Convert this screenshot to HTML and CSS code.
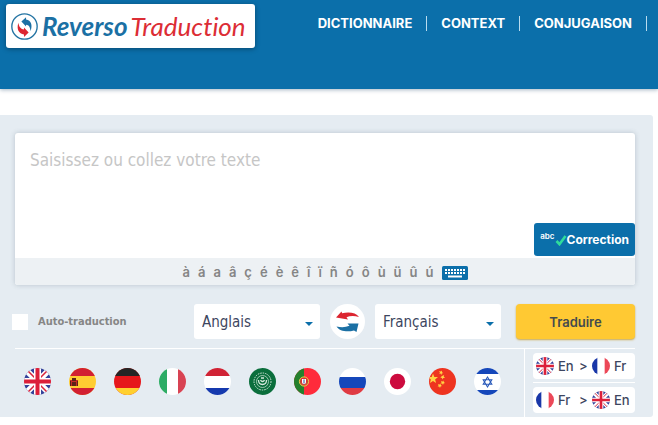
FILE: index.html
```html
<!DOCTYPE html>
<html lang="fr">
<head>
<meta charset="utf-8">
<meta name="viewport" content="width=device-width, initial-scale=1">
<title>Reverso Traduction</title>
<link rel="stylesheet" href="styles.css">
</head>
<body>
<svg class="defs" aria-hidden="true">
  <symbol id="uk" viewBox="0 0 27 27">
    <path fill="#34429a" d="M0 0h27v27H0z"/>
    <path stroke="#fff" stroke-width="6" d="M0 0l27 27M27 0L0 27"/>
    <path stroke="#d8243c" stroke-width="1.500" d="M1 0l12 12M26 0L14 12M1 27l12-12M26 27L14 15"/>
    <path stroke="#fff" stroke-width="7" d="M13.500 0v27M0 13.500h27"/>
    <path stroke="#dc203a" stroke-width="4" d="M13.500 0v27M0 13.500h27"/>
  </symbol>
  <symbol id="fr" viewBox="0 0 27 27">
    <path fill="#fff" d="M0 0h27v27H0z"/>
    <path fill="#1937a8" d="M0 0h8v27H0z"/>
    <path fill="#ec4858" d="M19 0h8v27h-8z"/>
  </symbol>
</svg>

<header class="header">
  <a class="logo" href="#" aria-label="Reverso Traduction">
    <svg class="logo-mark" viewBox="0 0 26 26" aria-hidden="true">
      <circle cx="13" cy="13" r="12.200" fill="#fff" stroke="#2474a3" stroke-width="1.300"/>
      <path fill="#1b70a4" d="M10 8.200L14.500 4v2.200c5 .8 6.500 5.500 4.300 11.300-.3-4-1.500-6-4.300-6.300V13z"/>
      <path fill="#dc2530" d="M17 18.800L12.500 23v-2.200c-5-.8-7.500-5.300-5.300-11.300.3 4 2.500 6.300 5.300 6.500v-2z"/>
    </svg>
    <span class="logo-text"><b>Reverso</b><span>Traduction</span></span>
  </a>
  <nav class="nav">
    <a href="#">DICTIONNAIRE</a>
    <a href="#">CONTEXT</a>
    <a href="#">CONJUGAISON</a>
  </nav>
</header>

<main class="panel">
  <section class="editor">
    <textarea class="source" aria-label="Texte à traduire" placeholder="Saisissez ou collez votre texte"></textarea>
    <button class="correction" type="button">
      <span class="abc">abc</span>
      <svg class="check" viewBox="0 0 12 12" aria-hidden="true"><path d="M1.500 7l3 3.200L10.500 2" fill="none" stroke="#2fdc9c" stroke-width="2.600"/></svg>
      <span>Correction</span>
    </button>
    <div class="chars">
      <button type="button">à</button><button type="button">á</button><button type="button">a</button><button type="button">â</button><button type="button">ç</button><button type="button">é</button><button type="button">è</button><button type="button">ê</button><button type="button">î</button><button type="button">ï</button><button type="button">ñ</button><button type="button">ó</button><button type="button">ô</button><button type="button">ù</button><button type="button">ü</button><button type="button">û</button><button type="button">ú</button>
      <button class="keyboard" type="button" aria-label="Clavier">
        <svg viewBox="0 0 26 14" aria-hidden="true">
          <rect width="26" height="14" rx="1.500" fill="#0b6faa"/>
          <path stroke="#fff" stroke-width="2" stroke-dasharray="2 1" d="M3 4h21M3 7h21"/>
          <path stroke="#fff" stroke-width="2" d="M6 10.500h14"/>
        </svg>
      </button>
    </div>
  </section>

  <form class="controls">
    <label class="auto"><input type="checkbox">Auto-traduction</label>
    <div class="select"><select aria-label="Langue source"><option>Anglais</option><option>Français</option></select></div>
    <button class="swap" type="button" aria-label="Inverser les langues">
      <svg viewBox="0 0 35 35" aria-hidden="true">
        <path fill="#dc2530" d="M6 13.500L11.500 7.500l.6 1.700C19 7.500 26 8.500 29 13c-5-1.500-9-1.300-12.500.3l1.500 2.200z"/>
        <path fill="#1b70a4" d="M28.500 19.500L26.500 28l-2.500-1.500C17 28.500 9 27 6.500 22.500c5 1.200 9 .9 13-.7L17.500 19.500z"/>
      </svg>
    </button>
    <div class="select"><select aria-label="Langue cible"><option>Français</option><option>Anglais</option></select></div>
    <button class="translate" type="button">Traduire</button>
  </form>

  <div class="shortcuts">
    <div class="flags">
      <button type="button" aria-label="Anglais"><svg class="flag"><use href="#uk"/></svg></button>
      <button type="button" aria-label="Espagnol"><svg class="flag" viewBox="0 0 27 27"><path fill="#ffcd32" d="M0 0h27v27H0z"/><path fill="#d22032" d="M0 0h27v8H0zM0 20h27v7H0z"/><path fill="#c62b25" d="M1 12h8v6H1z"/><path fill="#5e2418" d="M3 10h4v3H3zM1 13h1v5H1zM8 13h1v5H8zM3 14h4v4H3z"/></svg></button>
      <button type="button" aria-label="Allemand"><svg class="flag" viewBox="0 0 27 27"><path fill="#e6171b" d="M0 0h27v27H0z"/><path fill="#252525" d="M0 0h27v8H0z"/><path fill="#ffd02f" d="M0 20h27v7H0z"/></svg></button>
      <button type="button" aria-label="Italien"><svg class="flag" viewBox="0 0 27 27"><path fill="#fff" d="M0 0h27v27H0z"/><path fill="#2dac65" d="M0 0h8v27H0z"/><path fill="#d84353" d="M19 0h8v27h-8z"/></svg></button>
      <button type="button" aria-label="Néerlandais"><svg class="flag" viewBox="0 0 27 27"><path fill="#fff" d="M0 0h27v27H0z"/><path fill="#d02335" d="M0 0h27v8H0z"/><path fill="#1539ae" d="M0 20h27v7H0z"/></svg></button>
      <button type="button" aria-label="Arabe"><svg class="flag" viewBox="0 0 27 27"><path fill="#0a6e3c" d="M0 0h27v27H0z"/><g fill="none" stroke="#d5e8dc"><circle cx="13.500" cy="13.500" r="8.500" stroke-dasharray="1.500 1"/><circle cx="13.500" cy="13.500" r="6" stroke-width=".7"/><path stroke-width="1.300" d="M9.500 12c0 6 8 6 8 0M11.500 12c1 2 3 2 4 0M12 10h3"/></g></svg></button>
      <button type="button" aria-label="Portugais"><svg class="flag" viewBox="0 0 27 27"><path fill="#ff2b3b" d="M0 0h27v27H0z"/><path fill="#24802d" d="M0 0h10v27H0z"/><circle cx="10" cy="13.500" r="4.600" fill="#b44b32" stroke="#f0cd49"/><path fill="#fff" stroke="#dc2e35" d="M7.500 10.500h5V14c0 3.500-5 3.500-5 0z"/><path fill="#2a4aa0" d="M9.500 11.500h1v4h-1z"/></svg></button>
      <button type="button" aria-label="Russe"><svg class="flag" viewBox="0 0 27 27"><path fill="#fff" d="M0 0h27v27H0z"/><path fill="#1547ba" d="M0 9h27v11H0z"/><path fill="#df3b43" d="M0 20h27v7H0z"/></svg></button>
      <button type="button" aria-label="Japonais"><svg class="flag" viewBox="0 0 27 27"><path fill="#fff" d="M0 0h27v27H0z"/><circle cx="13.500" cy="13.500" r="7.700" fill="#cc0b3e"/></svg></button>
      <button type="button" aria-label="Chinois"><svg class="flag" viewBox="0 0 27 27"><path fill="#ee3420" d="M0 0h27v27H0z"/><path fill="#ffd344" d="M4 5.500l1.300 3.400 3.700.2-2.900 2.300 1 3.600L4 13l-3.100 2 1-3.600L-1 9.100l3.700-.2zM10 3l2 .6 1-1v1.600l1.300.8-1.500.5-.5 1.500-.8-1.400H10l1-1.200zM13 8l2-1-.3 1.600L16 10l-1.700.1-.8 1.400-.5-1.600-1.600-.3zM12 13l1.700.5 1-1v1.600l1.300.8-1.500.5-.5 1.500-.8-1.400h-1.600l1-1.200zM9 16l1.700.5 1-1v1.600l1.300.8-1.500.5-.5 1.500-.8-1.400H8.600l1-1.200z"/></svg></button>
      <button type="button" aria-label="Hébreu"><svg class="flag" viewBox="0 0 27 27"><path fill="#fff" d="M0 0h27v27H0z"/><path fill="#1547ba" d="M0 0h27v6H0zM0 22h27v5H0z"/><path fill="none" stroke="#2a5aba" stroke-width="1.100" d="M13.500 9l4.300 7.300H9.200zM13.500 19l4.300-7.300H9.200z"/></svg></button>
    </div>
    <div class="pairs">
      <button class="pair" type="button"><svg class="mini"><use href="#uk"/></svg><span>En</span><span>&gt;</span><svg class="mini"><use href="#fr"/></svg><span>Fr</span></button>
      <button class="pair" type="button"><svg class="mini"><use href="#fr"/></svg><span>Fr</span><span>&gt;</span><svg class="mini"><use href="#uk"/></svg><span>En</span></button>
    </div>
  </div>
</main>
</body>
</html>
```
FILE: styles.css
```css
* {
  box-sizing: border-box;
}

body {
  margin: 0;
  background: #fff;
  color: #3d4660;
  font-family: Inter, "Liberation Sans", sans-serif;
  overflow-x: hidden;
}

button {
  margin: 0;
  padding: 0;
  border: 0;
  background: none;
  color: inherit;
  font: inherit;
  cursor: pointer;
}

svg {
  display: block;
}

.defs {
  position: absolute;
  width: 0;
  height: 0;
}

/* Header */

.header {
  display: flex;
  align-items: flex-start;
  justify-content: space-between;
  height: 89px;
  padding: 4px 11px 0 6px;
  background: #0b6faa;
  box-shadow: 0 1px 4px rgba(0, 50, 90, 0.35);
}

.logo {
  display: flex;
  align-items: center;
  gap: 4px;
  height: 44px;
  padding: 0 9px 0 5px;
  border-radius: 3px;
  background: #fff;
  box-shadow: 0 1px 5px rgba(0, 0, 0, 0.35);
  text-decoration: none;
}

.logo-mark {
  width: 27px;
  height: 27px;
}

.logo-text {
  display: flex;
  gap: 3px;
  color: #dc2d35;
  font: italic 26px/36px Lato, sans-serif;
  font-variant-ligatures: none;
}

.logo-text b {
  color: #1b70a4;
}

.nav {
  display: flex;
  padding-top: 12px;
}

.nav a {
  padding: 0 14px;
  border-right: 1px solid #b9dcef;
  color: #fff;
  font-size: 13px;
  font-weight: 700;
  line-height: 15px;
  text-decoration: none;
}

/* Translation panel */

.panel {
  margin: 26px 5px 0 0;
  padding: 18px 18px 0 15px;
  border-radius: 0 3px 3px 0;
  background: #e5ecf2;
}

.editor {
  position: relative;
  border-radius: 3px;
  background: #fff;
  box-shadow: 0 0 5px rgba(80, 100, 120, 0.3);
}

.source {
  display: block;
  width: 100%;
  height: 125px;
  padding: 17px 15px;
  border: 0;
  outline: 0;
  background: none;
  resize: none;
  color: #3d4660;
  font: 17px/21px "DejaVu Sans Condensed", "DejaVu Sans", sans-serif;
}

.source::placeholder {
  color: #c6c6c6;
  opacity: 1;
}

.correction {
  position: absolute;
  right: 0;
  bottom: 29px;
  display: flex;
  align-items: center;
  height: 33px;
  padding: 0 6px;
  border-radius: 3px;
  background: #0b6faa;
  color: #fff;
  font-size: 12px;
  font-weight: 700;
}

.abc {
  align-self: flex-start;
  padding-top: 8px;
  font-size: 8px;
  font-weight: 600;
  line-height: 10px;
}

.check {
  width: 12px;
  height: 12px;
}

.chars {
  display: flex;
  align-items: center;
  justify-content: center;
  gap: 8px;
  height: 27px;
  border-radius: 0 0 3px 3px;
  background: #edf1f4;
  color: #858585;
  font-size: 13px;
  font-weight: 600;
}

.keyboard {
  width: 26px;
  padding-top: 3px;
}

/* Controls */

.controls {
  display: flex;
  align-items: center;
  margin: 19px 0 9px -3px;
}

.auto {
  display: flex;
  flex: 1;
  align-items: center;
  gap: 10px;
  color: #868686;
  font: bold 11px/16px "DejaVu Sans Condensed", "DejaVu Sans", sans-serif;
}

.auto input {
  width: 16px;
  height: 16px;
  margin: 0;
  appearance: none;
  background: #fff;
}

.auto input:checked {
  border: 4px solid #fff;
  background: #0b6faa;
}

.select {
  position: relative;
  width: 126px;
}

.select select {
  width: 100%;
  height: 35px;
  padding: 0 24px 0 8px;
  border: 0;
  border-radius: 3px;
  appearance: none;
  background: #fff;
  color: #3d4660;
  font: 15px "DejaVu Sans Condensed", "DejaVu Sans", sans-serif;
}

.select::after {
  content: "";
  position: absolute;
  top: 18px;
  right: 7px;
  border: 4px solid transparent;
  border-top-color: #0b6faa;
  border-bottom: 0;
  pointer-events: none;
}

.swap {
  width: 35px;
  height: 35px;
  margin: 0 10px;
  border-radius: 50%;
  background: #fff;
}

.translate {
  width: 119px;
  height: 35px;
  margin-left: 15px;
  border-radius: 4px;
  background: #ffc933;
  box-shadow: 0 1px 2px #c9a84c;
  color: #444b4e;
  font-size: 13px;
  font-weight: 600;
}

/* Language shortcuts */

.shortcuts {
  display: flex;
  height: 69px;
  border-top: 1px solid #fff;
}

.flags {
  display: flex;
  flex: 1;
  align-items: center;
  gap: 18px;
  padding: 0 0 4px 9px;
}

.flag {
  width: 27px;
  height: 27px;
  border-radius: 50%;
}

.pairs {
  padding: 4px 0 3px 8px;
  border-left: 1px solid #fff;
}

.pair {
  display: grid;
  grid-template-columns: 18px 17px 9px 18px 1fr;
  align-items: center;
  gap: 4px;
  width: 102px;
  height: 26px;
  padding: 0 3px;
  border-radius: 4px;
  background: #fff;
  font-size: 13px;
  font-weight: 500;
  text-align: left;
}

.pair + .pair {
  position: relative;
  margin-top: 8px;
}

.pair + .pair::before {
  content: "";
  position: absolute;
  top: -5px;
  left: 0;
  right: 0;
  height: 1px;
  background: #fff;
}

.mini {
  width: 18px;
  height: 18px;
  border-radius: 50%;
}
```
